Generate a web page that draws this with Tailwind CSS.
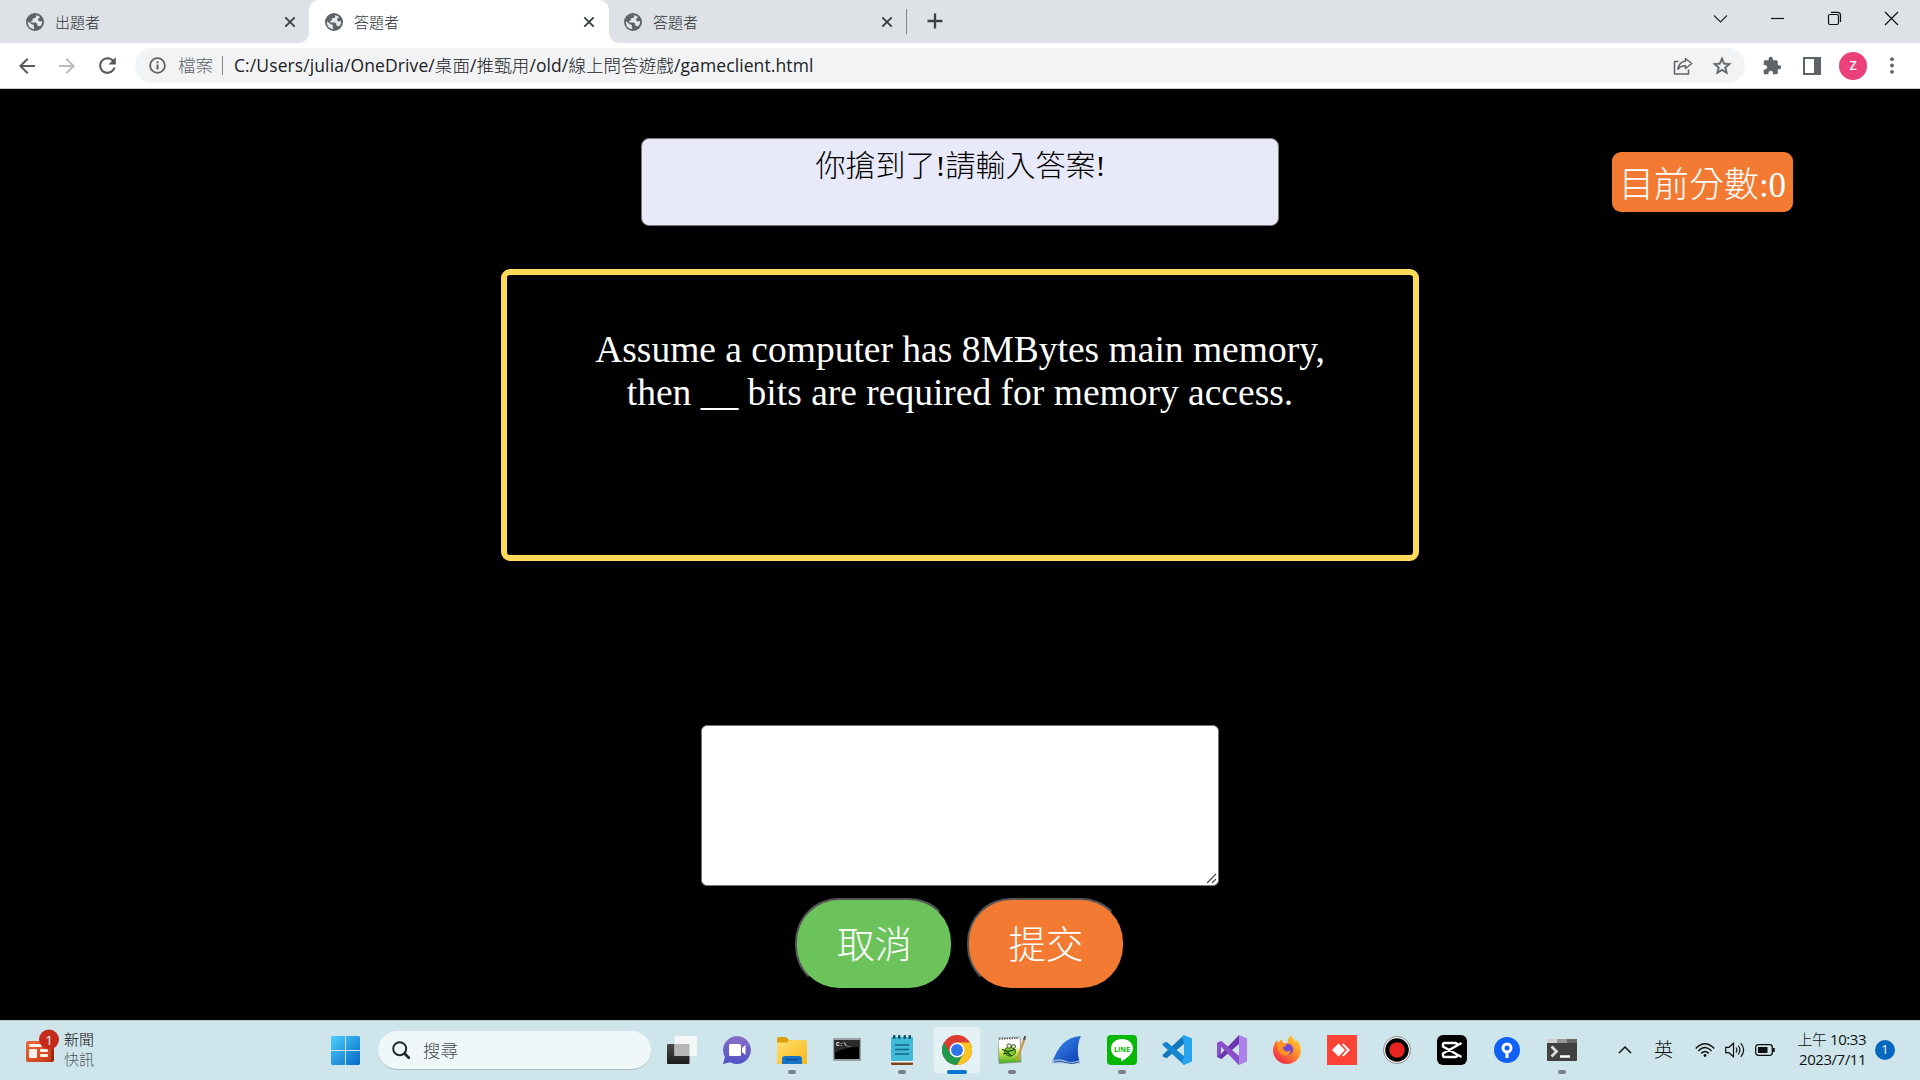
<!DOCTYPE html>
<html lang="zh-Hant">
<head>
<meta charset="utf-8">
<title>答題者</title>
<script src="https://cdn.jsdelivr.net/npm/@tailwindcss/browser@4"></script>
</head>
<body class="w-[1920px] h-[1080px] overflow-hidden bg-black flex flex-col font-['Open_Sans','Noto_Sans_CJK_TC',sans-serif]">
<svg width="0" height="0" class="absolute">
  <defs>
    <symbol id="globe" viewBox="0 0 18 18"><circle cx="9" cy="9" r="9" fill="#5f6368"/><path d="M2 8.3 5.8 11.2 7.8 12v2.6l.7 1.5C4.6 16 2 13.200 1.900 9.500zM8.500 1.900 10.800 2.100 9.600 4.800 6.800 5.600 6.600 7.600 4.900 8.500 5.600 9.600 9.400 9.400 11.300 10.600 11.200 12.600 13.600 13.200 14.600 12.900C15.800 11.500 16.200 9.800 16 8L13.600 8.400 12 7.200 12.600 5.200 14.100 4.200C12.800 2.800 11 2 8.500 1.900z" fill="#e3e6ea"/></symbol>
    <symbol id="x" viewBox="0 0 12 12"><path d="M1.300 1.300 10.700 10.700M10.700 1.300 1.300 10.700" stroke="#3c4043" stroke-width="1.900"/></symbol>
    <linearGradient id="win" x1="0" y1="0" x2="1" y2="1"><stop offset="0" stop-color="#4fd0fb"/><stop offset="1" stop-color="#0467c8"/></linearGradient>
    <linearGradient id="chat" x1="0" y1="0" x2="0" y2="1"><stop offset="0" stop-color="#8a6fc9"/><stop offset="1" stop-color="#4f52c4"/></linearGradient>
    <linearGradient id="fold" x1="0" y1="0" x2="1" y2="1"><stop offset="0" stop-color="#ffdf70"/><stop offset="1" stop-color="#f7b718"/></linearGradient>
    <linearGradient id="shark" x1="0" y1="0" x2="1" y2="1"><stop offset="0" stop-color="#3f8cf0"/><stop offset="1" stop-color="#0a3fb0"/></linearGradient>
    <linearGradient id="ffx" x1="1" y1="0" x2="0.200" y2="1"><stop offset="0" stop-color="#ffe53a"/><stop offset="0.500" stop-color="#ff8a25"/><stop offset="1" stop-color="#f0204e"/></linearGradient>
    <linearGradient id="news" x1="0" y1="0" x2="1" y2="1"><stop offset="0" stop-color="#f0683a"/><stop offset="1" stop-color="#c43a1a"/></linearGradient>
    <linearGradient id="npp" x1="0" y1="0" x2="0" y2="1"><stop offset="0.350" stop-color="#ffffff"/><stop offset="0.600" stop-color="#c9e64a"/><stop offset="1" stop-color="#3fa81f"/></linearGradient>
    <linearGradient id="dark" x1="0" y1="0" x2="0" y2="1"><stop offset="0" stop-color="#4a4a4a"/><stop offset="1" stop-color="#1c1c1c"/></linearGradient>
  </defs>
</svg>

<!-- Tab strip -->
<header class="h-[43px] shrink-0 flex bg-[#dee1e6] text-[15px] font-light text-[#2f3337]">
  <div class="w-[309px] bg-white">
    <div class="h-full flex items-center pl-[26px] pr-[13px] bg-[#dee1e6] rounded-br-[10px]">
      <svg class="w-[18px] h-[18px]"><use href="#globe"/></svg>
      <span class="ml-[11px] leading-[43px] pt-0.5">出題者</span>
      <svg class="w-3 h-3 ml-auto"><use href="#x"/></svg>
    </div>
  </div>
  <div class="w-[300px] flex items-center pl-4 pr-[14px] bg-white rounded-t-[10px]">
    <svg class="w-[18px] h-[18px]"><use href="#globe"/></svg>
    <span class="ml-[11px] leading-[43px] pt-0.5">答題者</span>
    <svg class="w-3 h-3 ml-auto"><use href="#x"/></svg>
  </div>
  <div class="w-[299px] bg-white">
    <div class="h-full flex items-center pl-[15px] pr-[15px] bg-[#dee1e6] rounded-bl-[10px]">
      <svg class="w-[18px] h-[18px]"><use href="#globe"/></svg>
      <span class="ml-[11px] leading-[43px] pt-0.5">答題者</span>
      <svg class="w-3 h-3 ml-auto"><use href="#x"/></svg>
    </div>
  </div>
  <div class="w-px h-[25px] mt-[9px] -ml-[2px] mr-px bg-[#85898e]"></div>
  <svg class="w-4 h-4 ml-[19px] mt-[13px]" viewBox="0 0 16 16"><path d="M8 .5v15M.5 8h15" stroke="#3c4043" stroke-width="2.300"/></svg>
  <div class="ml-auto flex items-start pt-[11px] gap-[42px] pr-[21px]">
    <svg class="w-[15px] h-[15px]" viewBox="0 0 15 15" fill="none" stroke="#222"><path d="M1 4.500 7.500 11 14 4.500" stroke-width="1.100"/></svg>
    <svg class="w-[15px] h-[15px]" viewBox="0 0 15 15"><path d="M1 7.500h13" stroke="#111" stroke-width="1.200"/></svg>
    <svg class="w-[15px] h-[15px]" viewBox="0 0 15 15" fill="none" stroke="#111" stroke-width="1.200"><rect x="1.500" y="3.500" width="10" height="10" rx="1.500"/><path d="M4 1.400h6.500a3 3 0 0 1 3 3V11"/></svg>
    <svg class="w-[15px] h-[15px]" viewBox="0 0 15 15"><path d="M1 1l13 13M14 1 1 14" stroke="#111" stroke-width="1.200"/></svg>
  </div>
</header>

<!-- Toolbar -->
<nav class="h-[46px] shrink-0 flex items-start bg-white border-b border-[#c9cbce] pt-[5px]">
  <div class="w-[135px] h-[35px] flex items-center pl-[15px] gap-[16px]">
    <svg class="w-6 h-6 shrink-0" viewBox="0 0 24 24" fill="#55595d"><path d="M20 11H7.830l5.590-5.590L12 4l-8 8 8 8 1.410-1.410L7.830 13H20v-2z"/></svg>
    <svg class="w-6 h-6 shrink-0" viewBox="0 0 24 24" fill="#babcbe"><path d="M4 11h12.170l-5.590-5.590L12 4l8 8-8 8-1.410-1.410L16.170 13H4v-2z"/></svg>
    <svg class="w-[25px] h-[25px] shrink-0" viewBox="0 0 24 24" fill="#55595d"><path d="M17.650 6.350C16.200 4.900 14.210 4 12 4c-4.420 0-7.990 3.580-7.990 8s3.570 8 7.990 8c3.730 0 6.840-2.550 7.730-6h-2.080c-.82 2.330-3.040 4-5.650 4-3.310 0-6-2.690-6-6s2.690-6 6-6c1.660 0 3.140.69 4.220 1.780L13 11h7V4l-2.350 2.350z"/></svg>
  </div>
  <div class="w-[1610px] h-[35px] rounded-full bg-[#f1f3f4] flex items-center pl-[14px] pr-[12px] text-[17.500px]">
    <svg class="w-[17px] h-[17px]" viewBox="0 0 17 17" fill="none"><circle cx="8.500" cy="8.500" r="7.400" stroke="#5f6368" stroke-width="1.800"/><path d="M8.500 7.500v5M8.500 4.300v2" stroke="#5f6368" stroke-width="2"/></svg>
    <span class="ml-[12px] text-[#5f6368] font-light">檔案</span>
    <div class="w-px h-[19px] ml-[9px] bg-[#85898e]"></div>
    <span class="ml-[11px] text-[#202124] whitespace-nowrap tracking-[0.1px]">C:/Users/julia/OneDrive/<span class="font-light">桌面</span>/<span class="font-light">推甄用</span>/old/<span class="font-light">線上問答遊戲</span>/gameclient.html</span>
    <svg class="w-[20px] h-[20px] ml-auto" viewBox="0 0 20 20" fill="none" stroke="#5f6368" stroke-width="1.500" stroke-linejoin="round"><path d="M5.500 5.500H1.500v12.500h14v-4.500"/><path d="M12.500 2.500 18.700 7.500 12.500 12.500V9.700C9 9.700 6.800 10.700 5 13.300 5.500 8.800 8 5.500 12.500 5.200z"/></svg>
    <svg class="w-[22px] h-[22px] ml-[18px]" viewBox="0 0 24 24" fill="#5f6368" stroke="#5f6368" stroke-width=".5"><path d="M22 9.240l-7.190-.62L12 2 9.190 8.630 2 9.240l5.460 4.730L5.820 21 12 17.270 18.180 21l-1.630-7.030L22 9.240zM12 15.400l-3.760 2.270 1-4.280-3.320-2.880 4.380-.38L12 6.100l1.710 4.040 4.380.38-3.320 2.880 1 4.280L12 15.400z"/></svg>
  </div>
  <div class="flex-1 h-[35px] flex items-center pl-[17px]">
    <svg class="w-[20px] h-[20px]" viewBox="0 0 24 24" fill="#5f6368"><path d="M20.500 11H19V7c0-1.100-.9-2-2-2h-4V3.500C13 2.120 11.880 1 10.500 1S8 2.120 8 3.500V5H4c-1.100 0-1.990.9-1.990 2v3.800H3.500c1.490 0 2.700 1.210 2.700 2.700s-1.210 2.700-2.700 2.700H2V20c0 1.100.9 2 2 2h3.800v-1.500c0-1.490 1.210-2.700 2.700-2.700 1.490 0 2.700 1.210 2.700 2.700V22H17c1.100 0 2-.9 2-2v-4h1.500c1.380 0 2.500-1.120 2.500-2.500S21.880 11 20.500 11z"/></svg>
    <svg class="w-[18px] h-[18px] ml-[21px]" viewBox="0 0 18 18"><path d="M0 0h18v18H0zM2 2v14h9V2z" fill="#5f6368" fill-rule="evenodd"/></svg>
    <div class="w-7 h-7 ml-[18px] rounded-full bg-[#ec407a] text-white text-[12px] font-medium font-['Roboto',sans-serif] flex items-center justify-center">Z</div>
    <svg class="w-1 h-[17px] ml-[23px]" viewBox="0 0 4 17" fill="#5f6368"><circle cx="2" cy="2.200" r="1.900"/><circle cx="2" cy="8.500" r="1.900"/><circle cx="2" cy="14.800" r="1.900"/></svg>
  </div>
</nav>

<!-- Quiz page -->
<main class="h-[931px] shrink-0 bg-black font-['Liberation_Serif','Noto_Sans_CJK_TC',serif]">
  <div class="grid grid-cols-[641px_638px_1fr] pt-[49px]">
    <div class="col-start-2 h-[88px] bg-[#e8e9f9] border border-[#767676] rounded-[8px] text-center text-[30px] leading-[40px] pt-[7px] pl-px text-black font-light">你搶到了!請輸入答案!</div>
    <div class="ml-[333px] mt-[14px] w-[181px] h-[60px] flex items-center justify-center bg-[#f27a32] rounded-[9px] text-white text-[35px] leading-[40px] pt-[7px] font-light whitespace-nowrap">目前分數:0</div>
  </div>
  <div class="ml-[501px] mt-[43px] w-[918px] h-[292px] border-[6px] border-[#ffd959] rounded-[9px] pt-[53px] text-center text-white text-[37.500px] leading-[43px]">Assume a computer has 8MBytes main memory,<br>then __ bits are required for memory access.</div>
  <div class="relative ml-[701px] mt-[164px] w-[518px] h-[161px]">
    <textarea class="block w-full h-full bg-white border border-[#767676] rounded-[6px] resize-none"></textarea>
    <svg class="absolute right-[2px] bottom-[2px] w-[11px] h-[11px]" viewBox="0 0 11 11"><path d="M1 10 10 1M6 10 10 6" stroke="#444" stroke-width="1.100"/></svg>
  </div>
  <div class="mt-3 ml-[795px] flex gap-[13px] text-white text-[37.500px] font-light">
    <button class="w-[158px] h-[92px] pt-1 pl-px bg-[#6cc35b] border-2 border-t-[#555] border-l-[#555] border-r-black border-b-black rounded-[44px]">取消</button>
    <button class="w-[158px] h-[92px] pt-1 ml-px bg-[#f27a32] border-2 border-t-[#555] border-l-[#555] border-r-black border-b-black rounded-[44px]">提交</button>
  </div>
</main>

<!-- Taskbar -->
<footer class="h-[60px] shrink-0 flex bg-[#cee5eb] border-t border-[#b9c9ce]">
  <div class="w-[331px] flex items-center">
    <svg class="w-[36px] h-[36px] ml-[24px] -mt-[10px]" viewBox="24 1026 36 36">
      <rect x="28" y="1039" width="26" height="21" rx="2" fill="#9c2a12"/><rect x="26" y="1039" width="25" height="21" rx="2" fill="url(#news)"/>
      <rect x="29" y="1042" width="16" height="3" rx="1" fill="#fff0e8"/><rect x="29" y="1047" width="8" height="9" rx="1" fill="#fff0e8"/><rect x="40" y="1047" width="8" height="3" rx="1" fill="#fff0e8"/><rect x="40" y="1052" width="8" height="3" rx="1" fill="#fff0e8"/>
      <circle cx="49" cy="1037.500" r="10" fill="#c42b1c"/><text x="49" y="1042.500" text-anchor="middle" font-size="13.500" fill="#fff" font-family="Open Sans">1</text>
    </svg>
    <div class="ml-1 text-[15px] leading-[20px] font-light -mt-[3px]"><div class="text-[#111]">新聞</div><div class="text-[#4c575c]">快訊</div></div>
  </div>
  <svg class="w-[29px] h-[29px] mt-[15px]" viewBox="0 0 29 29"><path d="M1 0H14V14H0V1zM15 0H28l1 1V14H15zM0 15H14V29H1L0 28zM15 15H29V28L28 29H15z" fill="url(#win)"/></svg>
  <div class="ml-[18px] mt-[10px] w-[273px] h-[39px] rounded-full bg-[#f0f7f9] border-b border-[#a9bcc2] flex items-center pl-[14px] text-[17.500px] font-light text-[#454c50]">
    <svg class="w-[18px] h-[18px]" viewBox="0 0 18 18" fill="none" stroke="#23282b"><circle cx="7.700" cy="7.700" r="6.500" stroke-width="2"/><path d="M12.500 12.500 17 17" stroke-width="2.800" stroke-linecap="round"/></svg>
    <span class="ml-[13px]">搜尋</span>
  </div>
  <div class="ml-[3px] flex items-start">
    <div class="w-[55px] pt-[15px] flex flex-col items-center"><svg class="w-[30px] h-[29px]" viewBox="0 0 30 29"><rect y="8" width="22.500" height="20" rx="1" fill="url(#dark)"/><rect x="7.500" width="22.500" height="20" rx="1" fill="#f5f7f8" opacity=".95"/><rect x="7.500" y="8" width="15" height="12" fill="#b5b7b8"/></svg></div>
    <div class="w-[55px] pt-[15px] flex flex-col items-center"><svg class="w-[28px] h-[28px]" viewBox="0 0 28 28"><path d="M14 0a14 14 0 1 1-7 26.200L0 28l1.900-7A14 14 0 0 1 14 0z" fill="url(#chat)"/><rect x="6" y="8" width="12" height="12" rx="1.500" fill="#fff"/><path d="M19 12l3.500-3v10L19 16z" fill="#fff"/></svg></div>
    <div class="w-[55px] pt-[16px] flex flex-col items-center gap-[6px]"><svg class="w-[30px] h-[27px]" viewBox="0 0 30 27"><path d="M0 1.500Q0 0 1.500 0H9l3.500 3.500L9 8H0z" fill="#dba010"/><path d="M0 5.500h9.500L12.500 3H28.500Q30 3 30 4.500V27H0z" fill="url(#fold)"/><path d="M5 27V22q0-3 3-3H22q3 0 3 3v5z" fill="#1673c5"/><path d="M9 22.500H21" stroke="#0a4f92" stroke-width="1.500"/></svg><div class="w-2 h-1 rounded-full bg-[#758186]"></div></div>
    <div class="w-[55px] pt-[17px] flex flex-col items-center"><svg class="w-[28px] h-[23px]" viewBox="0 0 28 23"><rect width="28" height="23" fill="#9ca2a5"/><rect x="1.500" y="2" width="25" height="19" fill="#000"/><path d="M1.500 2H26.500V9Q14 8 1.500 15z" fill="#2b2b2b"/><text x="3" y="8" font-size="6" font-family="Liberation Mono" font-weight="bold" fill="#fff">C:\_</text></svg></div>
    <div class="w-[55px] pt-[14px] flex flex-col items-center gap-[5px]"><svg class="w-[22px] h-[30px]" viewBox="0 0 22 30"><rect y="25" width="22" height="5" rx="1" fill="#7c431c"/><rect y="24" width="22" height="3.500" fill="#f5f5f5"/><rect y="2" width="22" height="24" rx="1" fill="#41b9d8"/><path d="M4 10H18M4 14.500H18M4 19H18" stroke="#126580" stroke-width="1.700"/><g fill="#0e5068"><rect x="2" width="2.500" height="4" rx="1"/><rect x="7" width="2.500" height="4" rx="1"/><rect x="12.500" width="2.500" height="4" rx="1"/><rect x="17.500" width="2.500" height="4" rx="1"/></g></svg><div class="w-2 h-1 rounded-full bg-[#758186]"></div></div>
    <div class="w-[55px] pt-[5px] flex justify-center"><div class="w-12 h-12 rounded-[5px] bg-[#e4f1f5] border border-[#d8e9ee] flex flex-col items-center pt-[8px] gap-[5px]"><svg class="w-[30px] h-[30px] shrink-0" viewBox="0 0 48 48"><circle cx="24" cy="24" r="24" fill="#dc3b2f"/><path d="M3.200 12A24 24 0 0 0 24 48L34.400 30 24 36 13.600 30z" fill="#1f9a4b"/><path d="M44.800 12H24L34.400 30 24 48A24 24 0 0 0 44.800 12z" fill="#fcc423"/><circle cx="24" cy="24" r="12" fill="#fff"/><circle cx="24" cy="24" r="9.500" fill="#2f74e8"/></svg><div class="w-5 h-1 shrink-0 rounded-full bg-[#0a74d1]"></div></div></div>
    <div class="w-[55px] pt-[15px] flex flex-col items-center gap-[6px]"><svg class="w-[28px] h-[28px]" viewBox="0 0 28 28"><path d="M0 2 22 1 23 26 1 27.500z" fill="url(#npp)" stroke="#8c9295" stroke-width=".8"/><path d="M1 3 21 2" stroke="#555" stroke-width="1.500" stroke-dasharray="1.500 1"/><ellipse cx="12" cy="15.500" rx="5.500" ry="4.500" fill="#7dcf30" stroke="#2c5218"/><circle cx="11" cy="10" r="2.200" fill="#d8f0b0" stroke="#333" stroke-width=".8"/><circle cx="15.500" cy="10.500" r="2" fill="#d8f0b0" stroke="#333" stroke-width=".8"/><path d="M4 13.500l6 2 7-2M5 18l5-1 3 3" fill="none" stroke="#1f3a12" stroke-width="1.200"/><path d="M27 1 19 24" stroke="#c99742" stroke-width="2.200"/><path d="M27.300 0 26 4" stroke="#555" stroke-width="2"/></svg><div class="w-2 h-1 rounded-full bg-[#758186]"></div></div>
    <div class="w-[55px] pt-[15px] flex flex-col items-center"><svg class="w-[29px] h-[28px]" viewBox="0 0 29 28"><path d="M0 27C6 10 14 1 29 0 25 8 25 18 28 27z" fill="url(#shark)"/><path d="M1 24.500Q8 22.500 14 25T27.500 24l1 3.500H0z" fill="#a9c3e6"/><path d="M2 26Q8 24 14 26.500T27 26" stroke="#234f9c" fill="none"/></svg></div>
    <div class="w-[55px] pt-[14px] flex flex-col items-center gap-[5px]"><svg class="w-[30px] h-[30px]" viewBox="0 0 30 30"><rect width="30" height="30" rx="4" fill="#06b806"/><path d="M15 4C21.500 4 26 8.200 26 13.500 26 19 19 23.500 14.500 26.500 14 26 14.600 24 14 23.300 8 23 4 18.500 4 13.500 4 8.200 8.500 4 15 4z" fill="#fff"/><text x="15" y="16.500" text-anchor="middle" font-size="7" font-weight="bold" font-family="Open Sans" fill="#06b806">LINE</text></svg><div class="w-2 h-1 rounded-full bg-[#758186]"></div></div>
    <div class="w-[55px] pt-[14px] flex flex-col items-center"><svg class="w-[30px] h-[30px]" viewBox="0 0 30 30"><path d="M22 0V9L4.500 23.200 1 21.800Q0 20.500 1 19.500z" fill="#1278bd"/><path d="M22 30V21L4.500 6.800 1 8.200Q0 9.500 1 10.500z" fill="#1687cf"/><path d="M22 0 30 3.500V26.500L22 30 20 28 22 21.500V8.500L20 2z" fill="#27a3ee"/></svg></div>
    <div class="w-[55px] pt-[14px] flex flex-col items-center"><svg class="w-[30px] h-[30px]" viewBox="0 0 30 30"><path d="M0 8 4.500 6 22 21V30z" fill="#a574dc"/><path d="M0 8V22L4.500 24 22 9V0L4 19V11z" fill="#6a35ad"/><path d="M0 8 4 6 22 21V30L4 11V19L0 22z" fill="#8a50cc"/><path d="M22 0 30 3.500V26.500L22 30z" fill="#ad80ea"/></svg></div>
    <div class="w-[55px] pt-[14px] flex flex-col items-center"><svg class="w-[28px] h-[29px]" viewBox="0 0 28 29"><path d="M2 8 4 5l1 3 4-4 1 4h5C14 5 16 2 18.500 0 19 4 22 4 23 7l1-2C27 9 28 12 27.800 16 27.500 23.500 21.500 29 14 29S0 23 0 15.500C0 12 1 10 2 8z" fill="url(#ffx)"/><circle cx="14.500" cy="14.500" r="5.700" fill="#7548d2"/><path d="M4 8.500 9 7.500 14 9.500Q12 12 9.500 12.300L11 15Q14 18 18 15 17 21 11.500 20.500 6 19 5 14z" fill="#ff9422"/></svg></div>
    <div class="w-[55px] pt-[14px] flex flex-col items-center"><svg class="w-[30px] h-[30px]" viewBox="0 0 30 30"><rect width="30" height="30" fill="#fb4338"/><path d="M5 15 11.500 8.500 18 15 11.500 21.500z" fill="#fff"/><path d="M15 9.500 16.500 8.500 23 15 16.500 21.500 15 20.500 20 15z" fill="#fff"/></svg></div>
    <div class="w-[55px] pt-[15px] flex flex-col items-center"><svg class="w-[28px] h-[28px]" viewBox="0 0 28 28"><circle cx="14" cy="14" r="13.500" fill="#fff" stroke="#888"/><circle cx="14" cy="14" r="11.800" fill="#000"/><circle cx="14" cy="14" r="7.700" fill="#e9241f"/></svg></div>
    <div class="w-[55px] pt-[14px] flex flex-col items-center"><svg class="w-[30px] h-[30px]" viewBox="0 0 30 30"><rect width="30" height="30" rx="6" fill="#000"/><path d="M24.500 8 6 18.500V20.500Q6 22 7.500 22H18.500Q20 22 20 20V19.500M24.500 22 6 11.500V9.500Q6 8 7.500 8H18.500Q20 8 20 10V10.500" fill="none" stroke="#fff" stroke-width="2.400"/></svg></div>
    <div class="w-[55px] pt-[16px] flex flex-col items-center"><svg class="w-[26px] h-[26px]" viewBox="0 0 26 26"><circle cx="13" cy="13" r="13" fill="#1061f5"/><circle cx="13" cy="11" r="4" fill="none" stroke="#fff" stroke-width="3"/><path d="M11.500 15h3v6h-3z" fill="#fff"/></svg></div>
    <div class="w-[55px] pt-[18px] flex flex-col items-center gap-[9px]"><svg class="w-[30px] h-[22px]" viewBox="0 0 30 22"><rect width="30" height="22" rx="1" fill="#414141"/><path d="M0 0H10V4H0z" fill="#cfcfcf"/><path d="M10 0H20V4H10z" fill="#969696"/><path d="M20 0H30V4H20z" fill="#666"/><path d="M4.500 7.500 9.500 12.500 4.500 17.500" stroke="#ddd" stroke-width="2.800" fill="none"/><path d="M13 17.500H23" stroke="#fff" stroke-width="2.500"/></svg><div class="w-2 h-1 rounded-full bg-[#758186]"></div></div>
  </div>
  <div class="flex-1 flex items-center h-[58px] text-[#111]">
    <svg class="w-[14px] h-[14px] ml-[29px]" viewBox="0 0 14 14"><path d="M1 10 7 4 13 10" stroke="#111" stroke-width="1.500" fill="none"/></svg>
    <span class="ml-[22px] text-[19px] leading-[20px] font-light">英</span>
    <svg class="w-5 h-4 ml-[22px]" viewBox="0 0 20 16" fill="none" stroke="#111" stroke-width="1.300"><path d="M.7 6.500Q10-3 19.300 6.500M3.400 9Q10 2 16.600 9M6.200 11.500Q10 7.500 13.800 11.500"/><circle cx="10" cy="13.500" r="1.400" fill="#111" stroke="none"/></svg>
    <svg class="w-5 h-4 ml-[10px]" viewBox="0 0 20 16" fill="none" stroke="#111" stroke-width="1.200"><path d="M.7 5.300H4L8.500 1.200V14.800L4 10.700H.7zM11 5.500Q12.800 8 11 10.500M13.300 3.500Q16.500 8 13.300 12.500M15.800 1.200Q21.500 8 15.800 14.800"/></svg>
    <svg class="w-5 h-3 ml-[10px]" viewBox="0 0 20 12"><rect x=".7" y=".7" width="16.600" height="10.600" rx="2.500" fill="none" stroke="#111" stroke-width="1.300"/><rect x="3" y="3" width="9.500" height="6" fill="#111"/><path d="M18.500 4v4" stroke="#111" stroke-width="2.500"/></svg>
    <div class="w-[91px] -mt-[2px] text-right text-[15px] leading-[20px] whitespace-nowrap tracking-[-0.45px]"><div><span class="font-light">上午</span> 10:33</div><div>2023/7/11</div></div>
    <div class="w-5 h-5 ml-[9px] rounded-full bg-[#0567c0] text-white text-[12px] flex items-center justify-center">1</div>
  </div>
</footer>
</body>
</html>
